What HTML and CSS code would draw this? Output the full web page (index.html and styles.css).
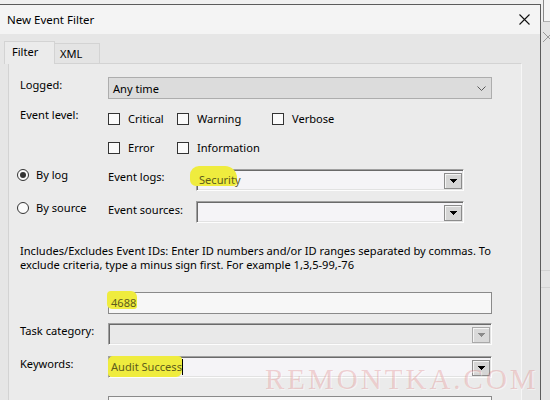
FILE: index.html
```html
<!DOCTYPE html>
<html>
<head>
<meta charset="utf-8">
<link rel="stylesheet" href="styles.css">
</head>
<body>
<div class="screen">
  <div class="dialog">
    <div class="titlebar">
      <span class="title">New Event Filter</span>
      <svg class="close" width="11" height="11" viewBox="0 0 11 11"><path d="M0.5 0.5L10.5 10.5M10.5 0.5L0.5 10.5" stroke="#111" stroke-width="1.1" fill="none"/></svg>
    </div>
    <div class="body">
      <div class="tabs">
        <div class="tab active">Filter</div>
        <div class="tab">XML</div>
      </div>
      <div class="panel">
        <div class="row">
          <div class="lbl">Logged:</div>
          <div class="combo-flat"><span>Any time</span>
            <svg width="9" height="5" viewBox="0 0 9 5"><path d="M0.5 0.5L4.5 4.5L8.5 0.5" stroke="#5a5a5a" fill="none"/></svg>
          </div>
        </div>
        <div class="row level">
          <div class="lbl">Event level:</div>
          <div class="checks">
            <div class="check"><span class="box"></span>Critical</div>
            <div class="check"><span class="box"></span>Warning</div>
            <div class="check"><span class="box"></span>Verbose</div>
            <div class="check"><span class="box"></span>Error</div>
            <div class="check"><span class="box"></span>Information</div>
          </div>
        </div>
        <div class="srow first">
          <div class="radio-col"><span class="radio on"></span>By log</div>
          <div class="lbl">Event logs:</div>
          <div class="combo3d w-short"><span class="hl hl-sec">Security</span>
            <span class="abtn"><svg width="7" height="4" viewBox="0 0 7 4"><rect x="0" y="0" width="7" height="1"/><rect x="1" y="1" width="5" height="1"/><rect x="2" y="2" width="3" height="1"/><rect x="3" y="3" width="1" height="1"/></svg></span>
          </div>
        </div>
        <div class="srow second">
          <div class="radio-col"><span class="radio"></span>By source</div>
          <div class="lbl">Event sources:</div>
          <div class="combo3d w-short"><span></span>
            <span class="abtn"><svg width="7" height="4" viewBox="0 0 7 4"><rect x="0" y="0" width="7" height="1"/><rect x="1" y="1" width="5" height="1"/><rect x="2" y="2" width="3" height="1"/><rect x="3" y="3" width="1" height="1"/></svg></span>
          </div>
        </div>
        <p class="hint">Includes/Excludes Event IDs: Enter ID numbers and/or ID ranges separated by commas. To<br>exclude criteria, type a minus sign first. For example 1,3,5-99,-76</p>
        <div class="row ids">
          <div class="lbl"></div>
          <div class="input"><span class="hl hl-ids">4688</span></div>
        </div>
        <div class="row task">
          <div class="lbl">Task category:</div>
          <div class="combo3d w-long disabled"><span></span>
            <span class="abtn"><svg width="7" height="4" viewBox="0 0 7 4"><rect x="0" y="0" width="7" height="1"/><rect x="1" y="1" width="5" height="1"/><rect x="2" y="2" width="3" height="1"/><rect x="3" y="3" width="1" height="1"/></svg></span>
          </div>
        </div>
        <div class="row kw">
          <div class="lbl">Keywords:</div>
          <div class="combo3d w-long"><span class="txt"><span class="hl hl-kw">Audit Success</span><span class="caret"></span></span>
            <span class="abtn"><svg width="7" height="4" viewBox="0 0 7 4"><rect x="0" y="0" width="7" height="1"/><rect x="1" y="1" width="5" height="1"/><rect x="2" y="2" width="3" height="1"/><rect x="3" y="3" width="1" height="1"/></svg></span>
          </div>
        </div>
        <div class="row user">
          <div class="lbl">User:</div>
          <div class="input"></div>
        </div>
      </div>
    </div>
  </div>
  <div class="behind">
    <div class="behind-top"></div>
    <div class="behind-body">
      <svg class="bx" width="9" height="12" viewBox="0 0 9 12"><path d="M1 1L11 11M1 11L11 1" stroke="#9a9a9a" fill="none"/></svg>
      <div class="bline l1"></div>
      <div class="bline l2"></div>
    </div>
  </div>
  <div class="watermark">REMONTKA.COM</div>
</div>
</body>
</html>
```
FILE: styles.css
```css
* { box-sizing: border-box; }
html, body { margin: 0; padding: 0; }
body {
  width: 550px;
  height: 400px;
  overflow: hidden;
  background: #f0f0f0;
  font-family: "Noto Sans", "Open Sans", sans-serif;
  font-size: 11.1px;
  color: #000;
}
.screen { display: flex; height: 400px; position: relative; }

.dialog {
  width: 541px;
  flex: none;
  margin-top: 4px;
  border-top: 1px solid #5c5c5c;
  border-right: 1px solid #5c5c5c;
  background: #e6e6e6;
  display: flex;
  flex-direction: column;
}
.titlebar {
  height: 29px;
  flex: none;
  background: #f4f4f4;
  display: flex;
  align-items: center;
  justify-content: space-between;
  padding: 0 10px 0 7px;
}
.title { font-size: 11.5px; line-height: 16px; }
.close { display: block; }

.body { flex: 1; padding: 7px 0 0 4px; display: flex; flex-direction: column; }
.tabs { display: flex; align-items: flex-end; height: 22px; }
.tab {
  height: 20px;
  width: 45px;
  border: 1px solid #d3d3d3;
  border-left: none;
  border-bottom: none;
  background: #e4e4e4;
  padding-left: 5px;
  line-height: 19px;
}
.tab.active {
  position: relative;
  z-index: 1;
  height: 23px;
  width: 51px;
  margin-bottom: -1px;
  border-left: 1px solid #d3d3d3;
  background: #ebebeb;
  padding-left: 7px;
  line-height: 20px;
}

.panel {
  flex: 1;
  margin-left: 4px;
  width: 514px;
  border: 1px solid #d3d3d3;
  border-right-color: #f6f6f6;
  border-bottom: none;
  background: #ebebeb;
  padding: 13px 0 0 11px;
}
.row { display: flex; align-items: flex-start; }
.lbl { width: 88px; flex: none; line-height: 16px; white-space: nowrap; }

.combo-flat {
  width: 384px;
  height: 22px;
  border: 1px solid #adadad;
  background: #dcdcdc;
  display: flex;
  align-items: center;
  justify-content: space-between;
  padding: 0 5px 0 4px;
}
.combo-flat svg { display: block; }

.level { margin-top: 8px; }
.checks {
  display: grid;
  grid-template-columns: 69px 95px auto;
  row-gap: 13px;
  margin-top: 4px;
}
.check { display: flex; align-items: center; gap: 8px; line-height: 16px; height: 16px; }
.box { width: 12px; height: 12px; border: 1px solid #333; background: #fafafa; flex: none; }

.srow { display: flex; align-items: flex-start; }
.srow.first { margin-top: 11px; }
.srow.second { margin-top: 9px; }
.radio-col {
  width: 91px;
  flex: none;
  margin-left: -3px;
  display: flex;
  align-items: center;
  gap: 7px;
  line-height: 16px;
}
.radio {
  width: 12px;
  height: 12px;
  border: 1px solid #333;
  border-radius: 50%;
  background: #fafafa;
  display: flex;
  align-items: center;
  justify-content: center;
  flex: none;
}
.radio.on::after { content: ""; width: 6px; height: 6px; border-radius: 50%; background: #333; }
.srow .lbl { margin-top: 2px; }
.srow.first .combo3d { margin-top: 2px; }
.srow.second .combo3d { margin-top: 1px; }

.combo3d {
  height: 22px;
  border: 1px solid;
  border-color: #a0a0a0 #fdfdfd #fdfdfd #a0a0a0;
  box-shadow: inset 1px 1px 0 #6a6a6a, inset -1px -1px 0 #e2e2e2;
  background: #f5f4f7;
  display: flex;
  align-items: center;
  justify-content: space-between;
  padding: 0 1px 0 2px;
  isolation: isolate;
}
.w-short { width: 268px; }
.w-long { width: 384px; }
.combo3d.disabled { background: #e9e9e9; }
.abtn {
  width: 18px;
  height: 16px;
  background: #d5d5d5;
  border: 1px solid #8c8c8c;
  box-shadow: inset 1px 1px 0 #f4f4f4;
  display: flex;
  align-items: center;
  justify-content: center;
  margin-top: 1px;
}
.abtn svg { display: block; fill: #000; }
.disabled .abtn { border-color: #a9a9a9; background: #d9d9d9; }
.disabled .abtn svg { fill: #8a8a8a; }

.hint { margin: 21px 0 0; line-height: 14px; white-space: nowrap; }

.ids { margin-top: 20px; }
.input {
  width: 384px;
  height: 22px;
  border: 1px solid #8a8a8a;
  background: #f7f7f7;
  padding-left: 2px;
  display: flex;
  align-items: center;
  isolation: isolate;
}
.task { margin-top: 9px; }
.kw { margin-top: 11px; }
.user { margin-top: 18px; }

.txt { display: flex; align-items: center; }
.caret { width: 1px; height: 16px; background: #000; margin-left: 0; }

.hl { position: relative; color: #5e5c1c; line-height: 16px; }
.hl::before {
  content: "";
  position: absolute;
  z-index: -1;
  background: #efec3e;
}
.hl-sec::before { left: -9px; right: 4px; top: -6px; bottom: 2px; border-radius: 9px 12px 4px 6px; }
.hl-ids::before { left: -4px; right: -1px; top: -4px; bottom: 2px; border-radius: 4px 6px 3px 5px; }
.hl-kw::before { left: -3px; right: 0; top: -3px; bottom: -2px; border-radius: 5px 4px 6px 4px; }

.behind { flex: 1; display: flex; flex-direction: column; }
.behind-top {
  height: 22px;
  flex: none;
  margin-left: 2px;
  border-left: 1px solid #8a8a8a;
  border-bottom: 1px solid #b0b0b0;
  background: #f5f5f5;
}
.behind-body { flex: 1; background: #e4e4e4; padding-top: 9px; }
.bx { display: block; margin-left: 1px; }
.bline { height: 1px; background: #d2d2d2; }
.l1 { margin-top: 227px; }
.l2 { margin-top: 16px; }

.watermark {
  position: absolute;
  left: 265px;
  top: 365px;
  font-family: "Liberation Serif", "DejaVu Serif", serif;
  font-size: 29px;
  line-height: 29px;
  letter-spacing: 3px;
  color: rgba(215, 95, 95, 0.26);
  text-shadow: 1px 1px 0 rgba(255, 255, 255, 0.45);
  white-space: nowrap;
}
```
